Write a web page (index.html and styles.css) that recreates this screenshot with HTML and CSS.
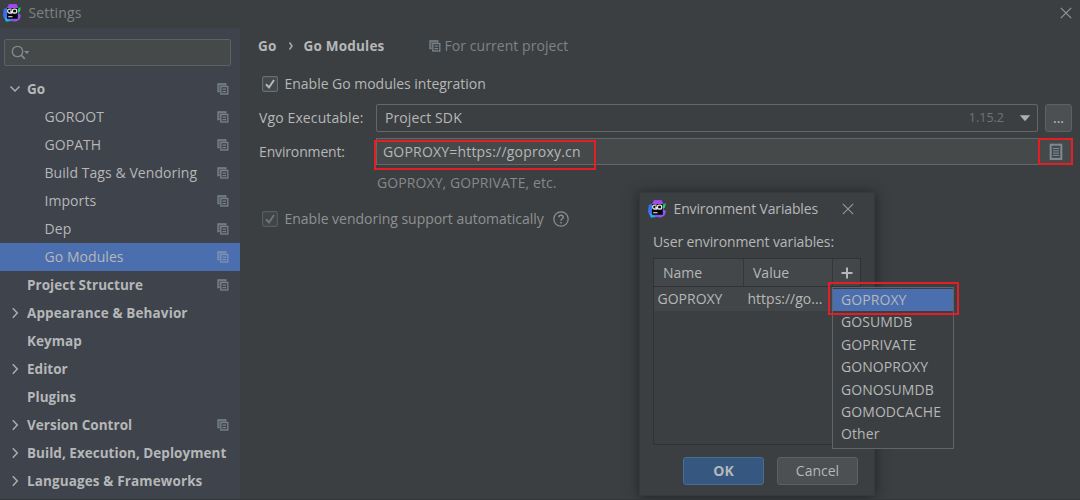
FILE: index.html
```html
<!DOCTYPE html>
<html lang="en">
<head>
<meta charset="utf-8">
<title>Settings</title>
<link rel="stylesheet" href="styles.css">
</head>
<body>
<svg class="defs" width="0" height="0">
  <defs>
    <linearGradient id="g1" x1="0" y1="0" x2="1" y2="1"><stop offset="0" stop-color="#1f7df0"/><stop offset=".5" stop-color="#4a68f0"/><stop offset="1" stop-color="#b64af0"/></linearGradient>
    <symbol id="goland" viewBox="0 0 18 18">
      <path d="M.8 5 4.500 3.500 6 .3 13.500.3 15.500 4 15.500 9 18 11.500 16.500 15.500 13 17.500 8 17 3 17.500 0 12Z" fill="url(#g1)"/>
      <path d="M4.200 4 6 .3 13.500.3 15 4Z" fill="#a646ec"/>
      <path d="M1.500 13 8 17 3 17.500Z" fill="#17b8e8"/>
      <path d="M13.500 6 17.800 3 17 7.500 14.500 9Z" fill="#22d36b"/>
      <rect x="4" y="4" width="10.800" height="10.800" fill="#080808"/>
      <path d="M8.600 5.100H6.300Q4.700 5.100 4.700 6.600v1q0 1.400 1.600 1.400h2.200V7.200H7M10.900 5.100h1.400q1.400 0 1.400 1.300v1.300q0 1.300-1.400 1.300h-1.400q-1.400 0-1.400-1.300V6.400q0-1.300 1.400-1.300Z" fill="none" stroke="#e4e4e4" stroke-width="1.300"/>
      <path d="M5.200 12.700h4.300" stroke="#ddd" stroke-width="1.100"/>
    </symbol>
    <symbol id="copy" viewBox="0 0 12 12">
      <path d="M1 .8h8V3H3v6H1Z" fill="currentColor" opacity=".4"/>
      <path d="M2.500 8.600H1V1h7.800v1.500" fill="none" stroke="currentColor" stroke-width="1.300"/>
      <rect x="3.800" y="3.500" width="7" height="7.500" fill="none" stroke="currentColor" stroke-width="1.300"/>
      <path d="M5.500 6.200h3.600M5.500 8.600h3.600" stroke="currentColor" stroke-width="1.200"/>
    </symbol>
    <symbol id="down" viewBox="0 0 12 12"><path d="m1.500 3.500 4.500 4.500 4.500-4.500" fill="none" stroke="currentColor" stroke-width="1.500"/></symbol>
    <symbol id="right" viewBox="0 0 12 12"><path d="m3.800 1.200 4.500 4.800-4.500 4.800" fill="none" stroke="currentColor" stroke-width="1.500"/></symbol>
    <symbol id="close" viewBox="0 0 12 12"><path d="m.8.8 10.400 10.400M11.200.8.8 11.200" fill="none" stroke="currentColor" stroke-width="1.100"/></symbol>
    <symbol id="check" viewBox="0 0 16 16"><rect x=".6" y=".6" width="14.800" height="14.800" rx="1.500" fill="#43494a" stroke="#6b6e70" stroke-width="1.100"/><path d="m4 8.300 3 3.200 5-7.500" fill="none" stroke="currentColor" stroke-width="2"/></symbol>
  </defs>
</svg>
<div class="window">
  <header class="titlebar">
    <svg class="logo"><use href="#goland"/></svg>
    <span class="title">Settings</span>
    <svg class="close"><use href="#close"/></svg>
  </header>
  <div class="body">
    <aside class="sidebar">
      <div class="search"><svg width="20" height="16" viewBox="0 0 20 16"><circle cx="6.500" cy="6.500" r="5.200" fill="none" stroke="#7d8c94" stroke-width="1.300"/><path d="m10.200 10.200 3.600 3.600" stroke="#7d8c94" stroke-width="1.700"/><path d="M13 6h5.500l-2.700 3z" fill="#7d8c94"/></svg></div>
      <nav class="tree">
        <div class="row top"><svg class="arrow"><use href="#down"/></svg><span>Go</span><svg class="copy"><use href="#copy"/></svg></div>
        <div class="row"><span>GOROOT</span><svg class="copy"><use href="#copy"/></svg></div>
        <div class="row"><span>GOPATH</span><svg class="copy"><use href="#copy"/></svg></div>
        <div class="row"><span>Build Tags &amp; Vendoring</span><svg class="copy"><use href="#copy"/></svg></div>
        <div class="row"><span>Imports</span><svg class="copy"><use href="#copy"/></svg></div>
        <div class="row"><span>Dep</span><svg class="copy"><use href="#copy"/></svg></div>
        <div class="row selected"><span>Go Modules</span><svg class="copy"><use href="#copy"/></svg></div>
        <div class="row top"><i class="arrow"></i><span>Project Structure</span><svg class="copy"><use href="#copy"/></svg></div>
        <div class="row top wide"><svg class="arrow"><use href="#right"/></svg><span>Appearance &amp; Behavior</span></div>
        <div class="row top"><i class="arrow"></i><span>Keymap</span></div>
        <div class="row top"><svg class="arrow"><use href="#right"/></svg><span>Editor</span></div>
        <div class="row top"><i class="arrow"></i><span>Plugins</span></div>
        <div class="row top"><svg class="arrow"><use href="#right"/></svg><span>Version Control</span><svg class="copy"><use href="#copy"/></svg></div>
        <div class="row top"><svg class="arrow"><use href="#right"/></svg><span>Build, Execution, Deployment</span></div>
        <div class="row top wide"><svg class="arrow"><use href="#right"/></svg><span>Languages &amp; Frameworks</span></div>
      </nav>
    </aside>
    <main class="content">
      <div class="crumbs"><b>Go</b><svg class="sep" viewBox="0 0 6 10"><path d="m1.500 1.500 2.500 3.500-2.500 3.500" fill="none" stroke="#aaa" stroke-width="1.500"/></svg><b class="page">Go Modules</b><svg class="copy"><use href="#copy"/></svg><span class="scope">For current project</span></div>
      <div class="option"><svg class="box"><use href="#check"/></svg><span class="enable">Enable Go modules integration</span></div>
      <div class="field sdk"><label>Vgo Executable:</label><div class="select"><span>Project SDK</span><em>1.15.2</em><svg width="12" height="8" viewBox="0 0 12 8"><path d="M.8 1.300h10.400L6 7.200z" fill="#adb0b2"/></svg></div><button class="more">...</button></div>
      <div class="field env"><label>Environment:</label><div class="input"><span>GOPROXY=https://goproxy.cn</span><svg width="14" height="18" viewBox="0 0 14 18"><rect x="1.700" y="1.700" width="10.600" height="14.200" fill="none" stroke="#7d8c94" stroke-width="2"/><path d="M4 5.500h6M4 7.800h6M4 10.100h6M4 12.400h6" stroke="#7d8c94"/></svg><div class="mark mark-input"></div><div class="mark mark-list"></div></div></div>
      <div class="hint">GOPROXY, GOPRIVATE, etc.</div>
      <div class="option disabled"><svg class="box"><use href="#check"/></svg><span class="vendoring">Enable vendoring support automatically</span><svg class="help" viewBox="0 0 16 16"><circle cx="8" cy="8" r="7.200" fill="none" stroke="currentColor" stroke-width="1.200"/><path d="M5.800 6.300q0-2 2.200-2t2.200 1.800Q10.200 7.300 8.900 8 8 8.500 8 9.800M8 11v1.400" fill="none" stroke="currentColor" stroke-width="1.400"/></svg></div>
    </main>
  </div>
  <section class="dialog">
    <header class="dialog-title"><svg class="logo"><use href="#goland"/></svg><span>Environment Variables</span><svg class="close"><use href="#close"/></svg></header>
    <p class="caption">User environment variables:</p>
    <div class="table">
      <div class="thead"><span>Name</span><span>Value</span><svg class="plus" viewBox="0 0 12 12"><path d="M6 .5v11M.5 6h11" stroke="#b5b7b8" stroke-width="2"/></svg></div>
      <div class="trow"><span>GOPROXY</span><span>https://go...</span></div>
    </div>
    <footer class="buttons"><button class="ok">OK</button><button class="cancel">Cancel</button></footer>
    <ul class="menu">
      <li class="active">GOPROXY</li><li>GOSUMDB</li><li>GOPRIVATE</li><li>GONOPROXY</li><li>GONOSUMDB</li><li>GOMODCACHE</li><li>Other</li>
    </ul>
    <div class="mark mark-menu"></div>
  </section>
</div>
</body>
</html>
```
FILE: styles.css
```css
* { box-sizing: border-box; }
body { margin: 0; background: #3c3f41; color: #b5b7b8; font: 14px/20px "Open Sans", "Noto Sans", sans-serif; }
svg { display: block; flex: none; }
.defs { position: absolute; }
.window { position: relative; width: 1080px; height: 500px; overflow: hidden; border-bottom: 1px solid #333638; display: flex; flex-direction: column; }
.titlebar { height: 28px; display: flex; align-items: center; padding: 0 8px 2px 3px; color: #7f8284; }
.logo { width: 18px; height: 18px; margin-right: 7.500px; }
.title { flex: 1; letter-spacing: .15px; }
.close { width: 12px; height: 12px; color: #96999b; }
.body { flex: 1; display: flex; min-height: 0; }
.sidebar { width: 240px; background: #3f434c; padding-top: 11px; overflow: hidden; }
.search { width: 227px; height: 27px; margin-left: 4px; border: 1px solid #5e6163; border-radius: 2px; background: #45494a; display: flex; align-items: center; padding-left: 6px; }
.tree { margin-top: 9px; }
.row { height: 27.970px; display: flex; align-items: center; padding: 0 11px 0 44.500px; letter-spacing: .06px; }
.row span { flex: 1; white-space: nowrap; }
.row.top { padding-left: 9px; font-weight: 700; font-size: 13.500px; letter-spacing: .03px; }
.row.wide { letter-spacing: .12px; }
.row.selected { background: #4b6eaf; }
.arrow { width: 12px; height: 12px; margin-right: 6px; flex: none; color: #aaadb0; }
.copy { width: 12px; height: 12px; color: #78838b; }
.selected .copy { color: #7f91b6; }
.content { flex: 1; padding: 8px 7px 0 18px; }
.crumbs { height: 20px; display: flex; align-items: center; }
.crumbs b { font-size: 13.500px; letter-spacing: .2px; }
.sep { width: 6px; height: 10px; margin: 0 10px 0 11px; }
.page { width: 125px; }
.crumbs .copy { margin-right: 4px; }
.scope { color: #7f8284; letter-spacing: .06px; }
.option { height: 20px; display: flex; align-items: center; padding-left: 4px; margin-top: 18px; }
.box { width: 16px; height: 16px; margin-right: 6.500px; }
.enable, .vendoring { letter-spacing: -.02px; }
.field { display: flex; align-items: center; }
.field label { width: 118px; padding-left: 1px; flex: none; white-space: nowrap; }
.sdk label { letter-spacing: .12px; }
.env label { letter-spacing: -.15px; }
.sdk { margin-top: 10px; height: 28px; }
.select { width: 662px; height: 28px; border: 1px solid #646769; border-radius: 2px; display: flex; align-items: center; padding: 0 6px 0 8px; }
.select span { flex: 1; letter-spacing: .1px; }
.select em { font-style: normal; font-size: 12.500px; color: #717476; margin-right: 15px; }
.more { width: 27px; height: 28px; margin-left: 7px; border: 1px solid #5e6163; border-radius: 3px; background: #4c5052; color: #c0c0c0; padding: 0; font: 14px/20px "Open Sans", sans-serif; }
.env { height: 27px; margin-top: 6px; }
.input { position: relative; flex: 1; height: 27px; border: 1px solid #646769; border-right: 0; background: #45494a; display: flex; align-items: center; padding: 0 10px 0 6px; }
.input span { flex: 1; letter-spacing: .19px; }
.mark { position: absolute; border: 2px solid #e51e25; }
.mark-input { left: -3px; top: 1px; width: 222px; height: 30px; }
.mark-list { right: 0; top: -1px; width: 35px; height: 27px; }
.hint { margin: 8px 0 0 119px; color: #85888a; letter-spacing: .09px; }
.disabled { color: #8e9193; margin-top: 16px; }
.disabled .box { opacity: .65; }
.help { width: 16px; height: 16px; margin-left: 9px; }
.dialog { position: absolute; left: 639px; top: 192px; width: 236px; height: 304px; background: #3c3f41; border: 1px solid #36393b; box-shadow: 0 1px 12px #202224; }
.dialog-title { height: 32px; display: flex; align-items: center; padding: 0 20px 0 8px; }
.dialog-title span { flex: 1; white-space: nowrap; letter-spacing: -.14px; }
.caption { margin: 7px 0 6px 13px; white-space: nowrap; letter-spacing: -.11px; }
.table { width: 208px; height: 187px; margin-left: 13px; border: 1px solid #303335; }
.thead { height: 28px; display: grid; grid-template-columns: 90px 89px 27px; border-bottom: 1px solid #303335; background: #434749; align-items: center; }
.thead span { border-right: 1px solid #33373a; height: 27px; line-height: 27px; padding-left: 9px; }
.plus { width: 12px; height: 12px; margin-left: 8px; }
.trow { display: grid; grid-template-columns: 90px 89px; width: 179px; height: 24px; line-height: 24px; background: #434648; }
.trow span { padding-left: 3.500px; white-space: nowrap; }
.buttons { display: flex; gap: 13px; margin: 12px 0 0 43px; }
.buttons button { width: 81px; height: 28px; border-radius: 3px; padding: 0; font: 14px/20px "Open Sans", sans-serif; color: #b5b7b8; border: 1px solid #5e6163; background: #4c5052; }
.buttons .ok { background: #365880; border-color: #456f94; font-weight: 700; }
.menu { position: absolute; left: 192px; top: 94px; width: 122px; height: 162px; margin: 0; padding: 1px 0; list-style: none; border: 1px solid #626567; background: #3c3f41; letter-spacing: .08px; }
.menu li { height: 22.400px; line-height: 22.400px; padding-left: 8px; }
.menu .active { background: #4b6eaf; }
.mark-menu { left: 188px; top: 89px; width: 131px; height: 33px; }
```
